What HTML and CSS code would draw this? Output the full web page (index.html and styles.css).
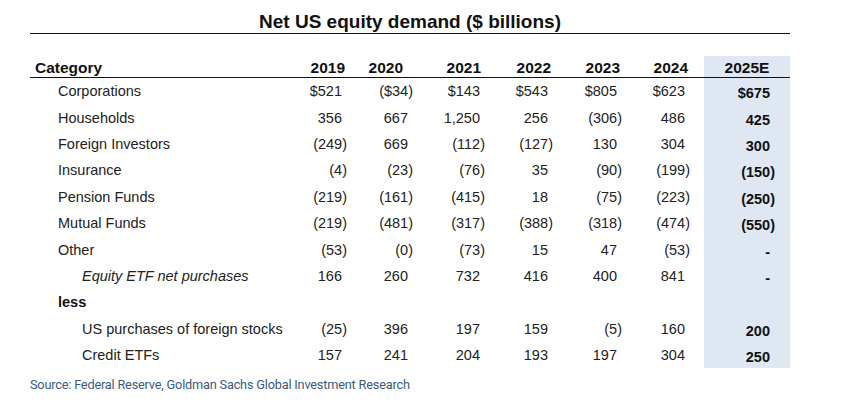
FILE: index.html
```html
<!DOCTYPE html>
<html>
<head>
<meta charset="utf-8">
<link rel="stylesheet" href="styles.css">
</head>
<body>
<div class="page">
  <h1 class="title">Net US equity demand ($ billions)</h1>
  <table class="demand">
    <colgroup>
      <col class="c-cat"><col class="c-2019"><col class="c-2020"><col class="c-2021"><col class="c-2022"><col class="c-2023"><col class="c-2024"><col class="c-gap"><col class="c-2025">
    </colgroup>
    <thead>
      <tr>
        <th class="cat-h">Category</th>
        <th class="yr">2019</th>
        <th class="yr yr-2020">2020</th>
        <th class="yr yr-2021">2021</th>
        <th class="yr">2022</th>
        <th class="yr">2023</th>
        <th class="yr">2024</th>
        <th class="gap"></th>
        <th class="est-h">2025E</th>
      </tr>
    </thead>
    <tbody>
      <tr><td class="l1">Corporations</td><td class="p">$521</td><td>($34)</td><td class="p">$143</td><td class="p">$543</td><td class="p">$805</td><td class="p">$623</td><td></td><td class="est p">$675</td></tr>
      <tr><td class="l1">Households</td><td class="p">356</td><td class="p">667</td><td class="p">1,250</td><td class="p">256</td><td>(306)</td><td class="p">486</td><td></td><td class="est p">425</td></tr>
      <tr><td class="l1">Foreign Investors</td><td>(249)</td><td class="p">669</td><td>(112)</td><td>(127)</td><td class="p">130</td><td class="p">304</td><td></td><td class="est p">300</td></tr>
      <tr><td class="l1">Insurance</td><td>(4)</td><td>(23)</td><td>(76)</td><td class="p">35</td><td>(90)</td><td>(199)</td><td></td><td class="est">(150)</td></tr>
      <tr><td class="l1">Pension Funds</td><td>(219)</td><td>(161)</td><td>(415)</td><td class="p">18</td><td>(75)</td><td>(223)</td><td></td><td class="est">(250)</td></tr>
      <tr><td class="l1">Mutual Funds</td><td>(219)</td><td>(481)</td><td>(317)</td><td>(388)</td><td>(318)</td><td>(474)</td><td></td><td class="est">(550)</td></tr>
      <tr><td class="l1">Other</td><td>(53)</td><td>(0)</td><td>(73)</td><td class="p">15</td><td class="p">47</td><td>(53)</td><td></td><td class="est p">-</td></tr>
      <tr><td class="l2 it">Equity ETF net purchases</td><td class="p">166</td><td class="p">260</td><td class="p">732</td><td class="p">416</td><td class="p">400</td><td class="p">841</td><td></td><td class="est p">-</td></tr>
      <tr><td class="l1 bold">less</td><td></td><td></td><td></td><td></td><td></td><td></td><td></td><td class="est"></td></tr>
      <tr><td class="l2">US purchases of foreign stocks</td><td>(25)</td><td class="p">396</td><td class="p">197</td><td class="p">159</td><td>(5)</td><td class="p">160</td><td></td><td class="est p">200</td></tr>
      <tr><td class="l2">Credit ETFs</td><td class="p">157</td><td class="p">241</td><td class="p">204</td><td class="p">193</td><td class="p">197</td><td class="p">304</td><td></td><td class="est p">250</td></tr>
    </tbody>
  </table>
  <p class="source">Source: Federal Reserve, Goldman Sachs Global Investment Research</p>
</div>
</body>
</html>
```

FILE: styles.css
```css
html, body {
  margin: 0;
  padding: 0;
  background: #ffffff;
}

.page {
  width: 760px;
  padding-left: 30px;
  font-family: "Liberation Sans", Arial, sans-serif;
  color: #222222;
}

.title {
  margin: 0;
  padding-top: 11px;
  height: 22px;
  line-height: 22px;
  font-size: 19px;
  font-weight: bold;
  text-align: center;
  color: #111111;
  border-bottom: 1px solid #111111;
}

.demand {
  margin-top: 22px;
  width: 760px;
  border-collapse: collapse;
  table-layout: fixed;
  font-size: 14.5px;
}

.c-cat { width: 260px; }
.c-2019 { width: 57px; }
.c-2020 { width: 66px; }
.c-2021 { width: 72px; }
.c-2022 { width: 68px; }
.c-2023 { width: 69px; }
.c-2024 { width: 68px; }
.c-gap { width: 14px; }
.c-2025 { width: 86px; }

.demand thead th {
  height: 21px;
  padding: 0 2px 0 0;
  font-size: 15.5px;
  font-weight: bold;
  color: #111111;
  vertical-align: bottom;
  line-height: 19px;
  text-align: right;
  border-bottom: 1.5px solid #111111;
}

.demand thead th.cat-h {
  text-align: left;
  padding-left: 5px;
}

.demand thead th.yr-2020 { padding-right: 10px; }
.demand thead th.yr-2021 { padding-right: 4px; }

.demand thead th.est-h {
  text-align: center;
  padding: 0;
  background: #dfe7f2;
}

.demand tbody td {
  height: 26.4px;
  padding: 0;
  text-align: right;
  vertical-align: middle;
  white-space: nowrap;
  line-height: 16px;
}

.demand tbody td.p {
  padding-right: 5px;
}

.demand tbody td.l1 {
  text-align: left;
  padding-left: 28px;
}

.demand tbody td.l2 {
  text-align: left;
  padding-left: 52px;
}

.it { font-style: italic; }
.bold { font-weight: bold; color: #111111; }

.demand tbody td.est {
  height: 22.4px;
  background: #dfe7f2;
  font-weight: bold;
  color: #111111;
  padding-right: 15px;
  padding-top: 4px;
}

.demand tbody td.est.p {
  padding-right: 20px;
}

.source {
  margin: 9px 0 0 0;
  font-family: Roboto, "Liberation Sans", sans-serif;
  font-size: 12.75px;
  color: #3b5a82;
  letter-spacing: -0.2px;
}
```
